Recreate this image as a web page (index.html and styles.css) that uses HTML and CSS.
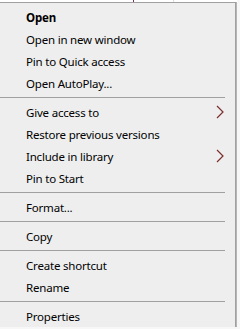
FILE: index.html
```html
<!DOCTYPE html>
<html lang="en">
<head>
    <meta charset="UTF-8">
    <meta name="viewport" content="width=device-width, initial-scale=1.0">
    <title>Context menu</title>
    <link rel="stylesheet" href="styles.css">
</head>
<body>

    <div class="top-strip">
        <span class="mark mark-purple"></span>
        <span class="mark mark-gray"></span>
    </div>

    <div class="menu">
        <div class="item bold">Open</div>
        <div class="item">Open in new window</div>
        <div class="item">Pin to Quick access</div>
        <div class="item">Open AutoPlay...</div>
        <div class="sep"></div>
        <div class="item">Give access to
            <svg class="arrow" width="8" height="14" viewBox="0 0 8 14"><path d="M1 1 L7 7 L1 13" fill="none" stroke="#7a2e2e" stroke-width="1.2"/></svg>
        </div>
        <div class="item">Restore previous versions</div>
        <div class="item">Include in library
            <svg class="arrow" width="8" height="14" viewBox="0 0 8 14"><path d="M1 1 L7 7 L1 13" fill="none" stroke="#7a2e2e" stroke-width="1.2"/></svg>
        </div>
        <div class="item">Pin to Start</div>
        <div class="sep"></div>
        <div class="item">Format...</div>
        <div class="sep"></div>
        <div class="item">Copy</div>
        <div class="sep"></div>
        <div class="item">Create shortcut</div>
        <div class="item">Rename</div>
        <div class="sep"></div>
        <div class="item">Properties</div>
    </div>

</body>
</html>
```

FILE: styles.css
```css
body {
    margin: 0;
    background-color: #f7f7f7;
    font-family: 'Noto Sans', 'Open Sans', sans-serif;
    font-size: 11.5px;
    letter-spacing: -0.2px;
    color: #000;
}
.top-strip {
    height: 2px;
    width: 237px;
    background-color: #fff;
    display: flex;
}
.mark {
    width: 1px;
    height: 2px;
}
.mark-purple {
    margin-left: 133px;
    background-color: #7a2f6a;
}
.mark-gray {
    margin-left: 39px;
    background-color: #ddd;
}
.menu {
    width: 235px;
    background-color: #eeeeee;
    border-top: 1px solid #a0a0a0;
    border-right: 1px solid #a0a0a0;
    box-shadow: 1px 0 0 #b5b5b5;
    padding-top: 3px;
}
.item {
    height: 22px;
    line-height: 22px;
    padding-left: 26px;
    padding-right: 10px;
    padding-top: 1px;
    box-sizing: border-box;
    display: flex;
    align-items: center;
    justify-content: space-between;
    white-space: nowrap;
}
.bold {
    font-weight: bold;
}
.arrow {
    margin-right: 1px;
    margin-top: -1px;
}
.sep {
    height: 1px;
    background-color: #a0a0a0;
    margin: 3px 10px 3px 0;
}
```
